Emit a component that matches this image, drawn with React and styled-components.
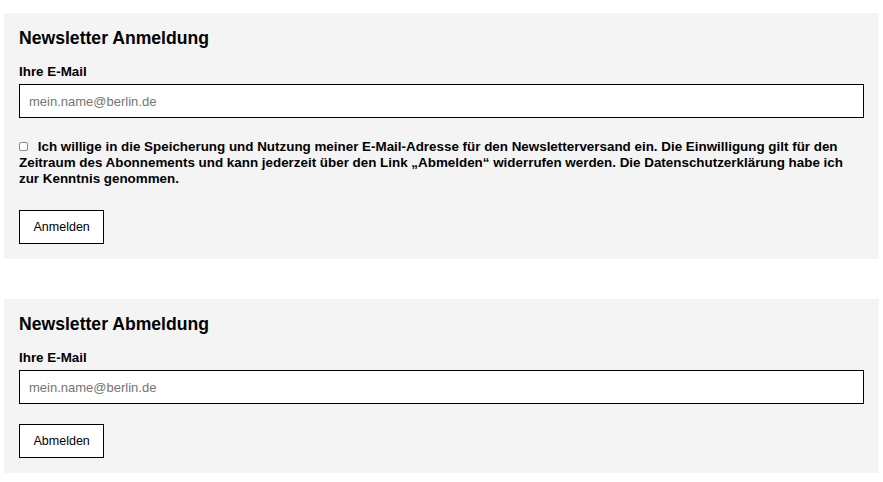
import React from "react";
import styled, { createGlobalStyle } from "styled-components";

const Global = createGlobalStyle`
  html, body { margin: 0; padding: 0; background: #fff; }
  body { font-family: "Liberation Sans", Arial, sans-serif; color: #000; }
  * { box-sizing: border-box; }
`;

const Page = styled.div`
  padding: 13px 4px 9px;
  display: flex;
  flex-direction: column;
  gap: 40px;
`;

const Panel = styled.form`
  background: #f4f4f4;
  padding: 15px 15px 15px;
  display: flex;
  flex-direction: column;
  align-items: flex-start;
`;

const Heading = styled.h2`
  margin: 0 0 16px;
  font-size: 17.6px;
  line-height: 20px;
  font-weight: 700;
`;

const Label = styled.label`
  font-size: 13.4px;
  line-height: 15px;
  font-weight: 700;
  margin-bottom: 5px;
`;

const Input = styled.input`
  width: 100%;
  height: 34px;
  border: 1px solid #000;
  border-radius: 0;
  background: #fff;
  padding: 0 9px;
  font-family: "Liberation Sans", Arial, sans-serif;
  font-size: 13px;
  color: #000;
  outline: none;
  &::placeholder { color: #757575; }
`;

const Consent = styled.label`
  margin-top: 21px;
  font-size: 13.4px;
  line-height: 16px;
  font-weight: 700;
`;

const Check = styled.input`
  appearance: none;
  -webkit-appearance: none;
  display: inline-block;
  width: 9px;
  height: 9px;
  margin: 0 6px 0 0;
  border: 1px solid #8a8a8a;
  border-radius: 2px;
  background: #fff;
  vertical-align: baseline;
`;

const Button = styled.button`
  margin-top: ${(p) => p.$gap}px;
  height: 34px;
  padding: 0 13.5px;
  border: 1px solid #000;
  border-radius: 0;
  background: #fff;
  font-family: "Liberation Sans", Arial, sans-serif;
  font-size: 12.5px;
  color: #000;
  cursor: pointer;
`;

export default function App() {
  return (
    <>
      <Global />
      <Page>
        <Panel onSubmit={(e) => e.preventDefault()}>
          <Heading>Newsletter Anmeldung</Heading>
          <Label htmlFor="sub-email">Ihre E-Mail</Label>
          <Input id="sub-email" type="email" placeholder="mein.name@berlin.de" />
          <Consent>
            <Check type="checkbox" /> Ich willige in die Speicherung und Nutzung meiner
            E-Mail-Adresse für den Newsletterversand ein. Die Einwilligung gilt für den
            Zeitraum des Abonnements und kann jederzeit über den Link „Abmelden“ widerrufen
            werden. Die Datenschutzerklärung habe ich zur Kenntnis genommen.
          </Consent>
          <Button type="submit" $gap={23}>Anmelden</Button>
        </Panel>
        <Panel onSubmit={(e) => e.preventDefault()}>
          <Heading>Newsletter Abmeldung</Heading>
          <Label htmlFor="unsub-email">Ihre E-Mail</Label>
          <Input id="unsub-email" type="email" placeholder="mein.name@berlin.de" />
          <Button type="submit" $gap={20}>Abmelden</Button>
        </Panel>
      </Page>
    </>
  );
}
